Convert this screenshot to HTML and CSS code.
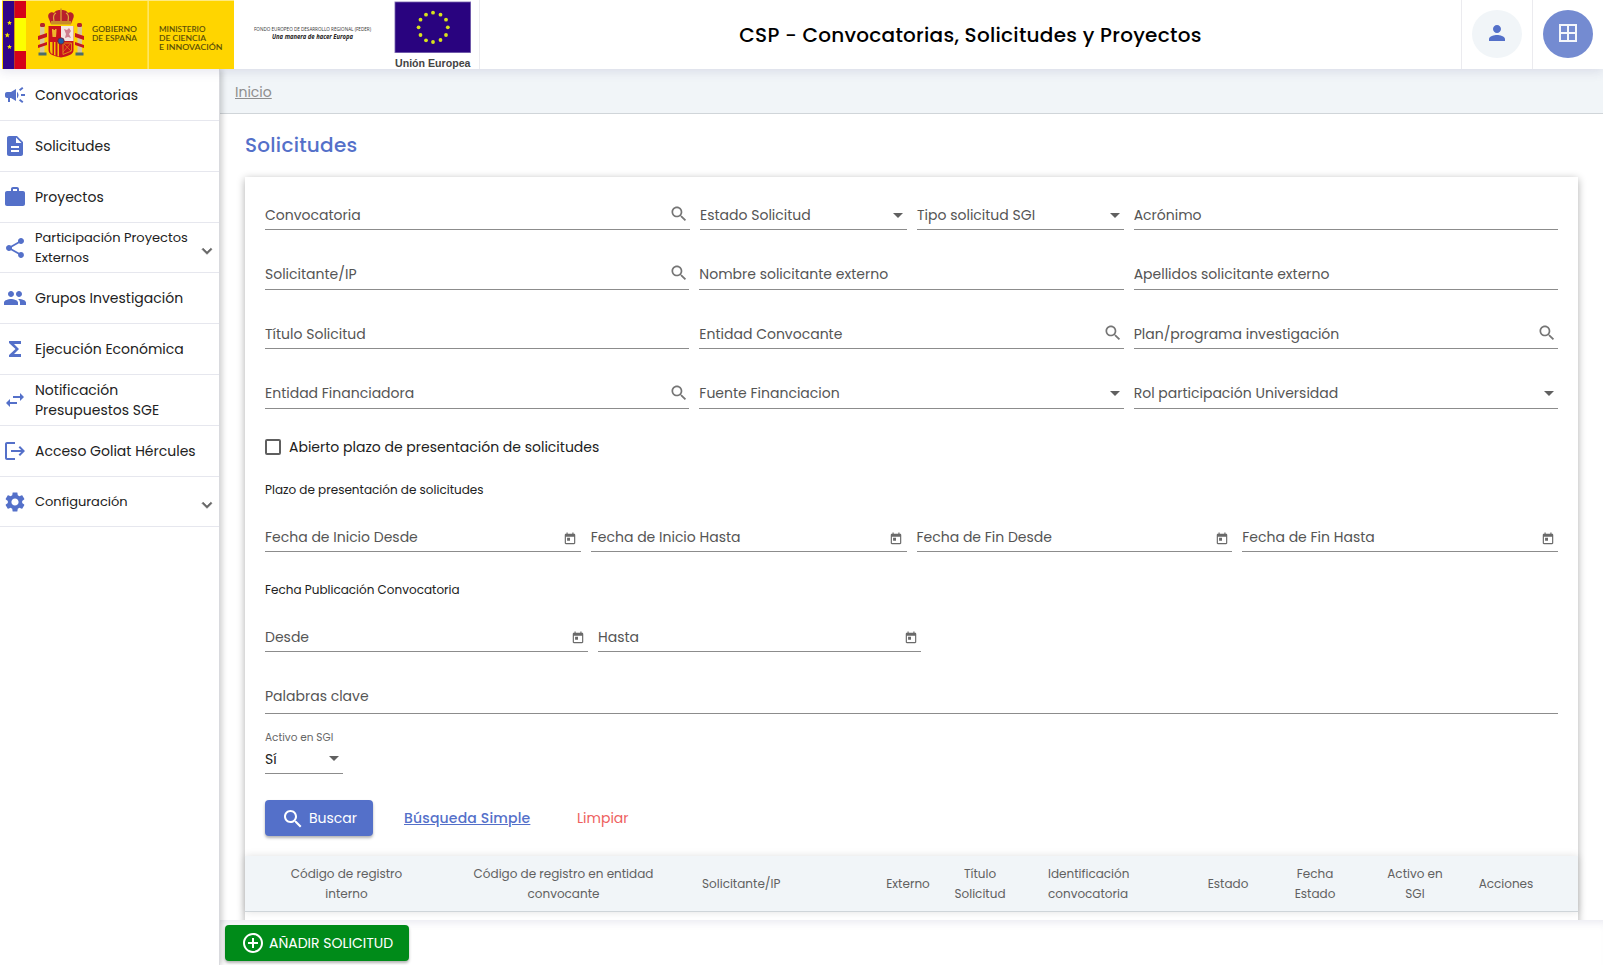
FILE: index.html
```html
<!DOCTYPE html>
<html lang="es">
<head>
<meta charset="utf-8">
<title>CSP - Convocatorias, Solicitudes y Proyectos</title>
<link rel="stylesheet" href="styles.css">
</head>
<body>
<svg class="defs" aria-hidden="true">
  <symbol id="search" viewBox="0 0 24 24"><path d="M15.5 14h-.79l-.28-.27C15.41 12.59 16 11.11 16 9.5 16 5.91 13.09 3 9.5 3S3 5.91 3 9.5 5.91 16 9.5 16c1.61 0 3.09-.59 4.23-1.57l.27.28v.79l5 4.99L20.49 19l-4.99-5zm-6 0C7.01 14 5 11.99 5 9.5S7.01 5 9.5 5 14 7.01 14 9.5 11.99 14 9.5 14z"/></symbol>
  <symbol id="calendar" viewBox="0 0 24 24"><path d="M19 3h-1V1h-2v2H8V1H6v2H5c-1.11 0-1.99.9-1.99 2L3 19c0 1.1.89 2 2 2h14c1.1 0 2-.9 2-2V5c0-1.1-.9-2-2-2zm0 16H5V8h14v11zM7 10h5v5H7z"/></symbol>
  <symbol id="chevron" viewBox="0 0 24 24"><path d="M16.59 8.59L12 13.17 7.41 8.59 6 10l6 6 6-6z" stroke="currentColor" stroke-width=".8"/></symbol>
</svg>

<header class="header">
  <svg class="logo-gob" width="235" height="69" viewBox="0 0 235 69">
    <rect x="2" y="0.500" width="232" height="68.500" fill="#ffd500"/>
    <rect x="3" y="1" width="11.500" height="68" fill="#310489"/>
    <rect x="14.500" y="1" width="11.500" height="68" fill="#d50219"/>
    <rect x="14.500" y="18" width="11.500" height="33" fill="#fcff00"/>
    <g fill="#f4e600">
      <path d="M9.500 20.500l.7 1.600 1.700.1-1.300 1.100.4 1.700-1.500-.9-1.500.9.4-1.700-1.300-1.100 1.700-.1z"/>
      <path d="M7.300 32.500l.8 1.800 1.900.1-1.500 1.200.5 1.900-1.700-1-1.700 1 .5-1.900-1.500-1.200 1.900-.1z"/>
      <path d="M9.500 44.500l.7 1.600 1.700.1-1.300 1.100.4 1.700-1.500-.9-1.500.9.4-1.700-1.300-1.100 1.700-.1z"/>
    </g>
    <rect x="147.600" y="1" width="1" height="68" fill="#fff0a0"/>
    <g class="arms">
      <rect x="40" y="26" width="4.500" height="28" fill="#d9c79a"/><rect x="77.500" y="26" width="4.500" height="28" fill="#d9c79a"/>
      <rect x="40" y="23" width="5" height="4" rx="1.500" fill="#b5222c"/><rect x="77" y="23" width="5" height="4" rx="1.500" fill="#b5222c"/>
      <path d="M38 36l9-3v4l-9 3zM38 45l9-3v3l-9 3zM84 36l-9-3v4l9 3zM84 45l-9-3v3l9 3z" fill="#c5161f"/>
      <rect x="38.500" y="52.500" width="8" height="3" fill="#4b6e6a"/><rect x="75.500" y="52.500" width="8" height="3" fill="#4b6e6a"/>
      <path d="M49 19c-3-6 3-8 5-6 2-3 4-3 7-3s5 0 7 3c2-2 8 0 5 6l-2 5H51z" fill="#b8202b"/>
      <path d="M54 21c-1-4 0-7 2-8M61 21V10M68 21c1-4 0-7-2-8" fill="none" stroke="#e0a83c" stroke-width="1.200"/>
      <path d="M60.300 8.500h1.400v3h-1.400zM51 21h20v3.500H51z" fill="#c98a2a"/>
      <path d="M48.500 26h25v24c0 5-6 6-12.500 7.500C54.500 56 48.500 55 48.500 50z" fill="#c9141d"/>
      <path d="M61 26h12.500v15H61z" fill="#f3e6e3"/>
      <path d="M64 29l3 1 2-2 2 3-2 3 2 4-3-1-3 1 1-4z" fill="#cf7f8f"/>
      <path d="M52 31v-2h1.500v1h1.500v-1h1.500v2l-.5 6h-3.500z" fill="#efb62a"/>
      <path d="M50 42v8c0 3 2 4 2.500 4V42zM54 42v13l1.500.5V42zM57.500 42v14l1.500.5V42z" fill="#f5c400"/>
      <path d="M63 43h8.500v8l-8.500 3.500z" fill="none" stroke="#e08a1a" stroke-width="1"/>
      <path d="M63 43l8 8M71 43l-8 9" stroke="#e08a1a" stroke-width=".7"/>
      <circle cx="61" cy="41" r="3.200" fill="#1f5da8" stroke="#7b1a2a" stroke-width=".8"/>
    </g>
    <g class="gob-text">
      <text x="92" y="32" textLength="45" lengthAdjust="spacingAndGlyphs">GOBIERNO</text>
      <text x="92" y="41" textLength="45" lengthAdjust="spacingAndGlyphs">DE ESPAÑA</text>
      <text x="159" y="32" textLength="46.500" lengthAdjust="spacingAndGlyphs">MINISTERIO</text>
      <text x="159" y="41" textLength="47" lengthAdjust="spacingAndGlyphs">DE CIENCIA</text>
      <text x="159" y="50" textLength="63.500" lengthAdjust="spacingAndGlyphs">E INNOVACIÓN</text>
    </g>
  </svg>
  <svg class="logo-ue" width="244" height="69" viewBox="235 0 244 69">
    <text class="feder" x="254" y="31.300" textLength="117" lengthAdjust="spacingAndGlyphs">FONDO EUROPEO DE DESARROLLO REGIONAL (FEDER)</text>
    <text class="manera" x="272" y="38.500" textLength="81" lengthAdjust="spacingAndGlyphs">Una manera de hacer Europa</text>
    <rect x="394.500" y="1.500" width="76.500" height="51.500" fill="#8f80bd"/>
    <rect x="395.300" y="2.300" width="75" height="50" fill="#29037f"/>
    <g fill="#d8e31c">
      <circle cx="433" cy="12.700" r="1.900"/><circle cx="440.500" cy="14.700" r="1.900"/><circle cx="446" cy="19.700" r="1.900"/><circle cx="447.800" cy="27.300" r="1.900"/><circle cx="446" cy="35" r="1.900"/><circle cx="440.500" cy="40" r="1.900"/><circle cx="433" cy="42" r="1.900"/><circle cx="426" cy="40.300" r="1.900"/><circle cx="420.500" cy="35" r="1.900"/><circle cx="418.600" cy="27.300" r="1.900"/><circle cx="420.500" cy="19.700" r="1.900"/><circle cx="426" cy="14.700" r="1.900"/>
    </g>
    <text class="union" x="395" y="66.800" textLength="75.500" lengthAdjust="spacingAndGlyphs">Unión Europea</text>
  </svg>
  <h1 class="app-title">CSP - Convocatorias, Solicitudes y Proyectos</h1>
  <div class="user-cell"><span class="round"><svg class="i24" viewBox="0 0 24 24"><path d="M12 12c2.210 0 4-1.790 4-4s-1.790-4-4-4-4 1.790-4 4 1.790 4 4 4zm0 2c-2.670 0-8 1.340-8 4v2h16v-2c0-2.660-5.330-4-8-4z"/></svg></span></div>
  <div class="apps-cell"><span class="round round-apps"><svg class="i24" viewBox="0 0 24 24"><path d="M3 3v18h18V3H3zm8 16H5v-6h6v6zm0-8H5V5h6v6zm8 8h-6v-6h6v6zm0-8h-6V5h6v6z"/></svg></span></div>
</header>

<div class="body">
  <nav class="side">
    <a class="item"><svg class="i24" viewBox="0 0 24 24"><path d="M18 11v2h4v-2h-4zm-2 6.610c.96.71 2.210 1.650 3.200 2.390.4-.53.8-1.070 1.200-1.600-.99-.74-2.240-1.680-3.200-2.400-.4.540-.8 1.080-1.200 1.610zM20.400 5.600c-.4-.53-.8-1.070-1.200-1.600-.99.74-2.240 1.680-3.200 2.400.4.530.8 1.070 1.200 1.600.96-.72 2.210-1.650 3.200-2.400zM4 9c-1.100 0-2 .9-2 2v2c0 1.100.9 2 2 2h1v4h2v-4h1l5 3V6L8 9H4zm11.500 3c0-1.330-.58-2.530-1.500-3.350v6.690c.92-.81 1.500-2.010 1.500-3.340z"/></svg><span>Convocatorias</span></a>
    <a class="item"><svg class="i24" viewBox="0 0 24 24"><path d="M14 2H6c-1.100 0-1.990.9-1.990 2L4 20c0 1.100.89 2 1.990 2H18c1.100 0 2-.9 2-2V8l-6-6zm2 16H8v-2h8v2zm0-4H8v-2h8v2zm-3-5V3.500L18.500 9H13z"/></svg><span>Solicitudes</span></a>
    <a class="item"><svg class="i24" viewBox="0 0 24 24"><path d="M20 6h-4V4c0-1.110-.89-2-2-2h-4c-1.110 0-2 .89-2 2v2H4c-1.110 0-1.990.89-1.990 2L2 19c0 1.110.89 2 2 2h16c1.110 0 2-.89 2-2V8c0-1.110-.89-2-2-2zm-6 0h-4V4h4v2z"/></svg><span>Proyectos</span></a>
    <a class="item short small"><svg class="i24" viewBox="0 0 24 24"><path d="M18 16.080c-.76 0-1.440.3-1.960.77L8.910 12.700c.05-.23.09-.46.09-.7s-.04-.47-.09-.7l7.050-4.110c.54.5 1.250.81 2.040.81 1.660 0 3-1.340 3-3s-1.340-3-3-3-3 1.340-3 3c0 .24.04.47.09.7L8.040 9.810C7.500 9.310 6.790 9 6 9c-1.660 0-3 1.340-3 3s1.340 3 3 3c.79 0 1.500-.31 2.040-.81l7.120 4.160c-.05.21-.08.43-.08.65 0 1.610 1.310 2.920 2.920 2.920s2.920-1.310 2.920-2.920-1.310-2.920-2.920-2.920z"/></svg><span>Participación Proyectos<br>Externos</span><svg class="chev"><use href="#chevron"/></svg></a>
    <a class="item"><svg class="i24" viewBox="0 0 24 24"><path d="M16 11c1.660 0 2.990-1.340 2.990-3S17.660 5 16 5c-1.660 0-3 1.340-3 3s1.340 3 3 3zm-8 0c1.660 0 2.990-1.340 2.990-3S9.660 5 8 5C6.340 5 5 6.340 5 8s1.340 3 3 3zm0 2c-2.330 0-7 1.170-7 3.500V19h14v-2.500c0-2.330-4.670-3.500-7-3.500zm8 0c-.29 0-.62.02-.97.05 1.160.84 1.970 1.970 1.970 3.450V19h6v-2.500c0-2.330-4.670-3.500-7-3.500z"/></svg><span>Grupos Investigación</span></a>
    <a class="item"><svg class="i24" viewBox="0 0 24 24"><path d="M18 4H6v2l6.500 6L6 18v2h12v-3h-7l5-5-5-5h7z"/></svg><span>Ejecución Económica</span></a>
    <a class="item"><svg class="i24" viewBox="0 0 24 24"><path d="M6.990 11L3 15l3.990 4v-3H14v-2H6.990v-3zM21 9l-3.990-4v3H10v2h7.010v3L21 9z"/></svg><span>Notificación<br>Presupuestos SGE</span></a>
    <a class="item"><svg class="i24" viewBox="0 0 24 24"><path d="M17 7l-1.410 1.410L18.170 11H8v2h10.170l-2.580 2.580L17 17l5-5zM4 5h8V3H4c-1.100 0-2 .9-2 2v14c0 1.100.9 2 2 2h8v-2H4V5z"/></svg><span>Acceso Goliat Hércules</span></a>
    <a class="item short small"><svg class="i24" viewBox="0 0 24 24"><path d="M19.140 12.940c.04-.3.060-.61.060-.94 0-.32-.02-.64-.07-.94l2.030-1.580c.18-.14.23-.41.12-.61l-1.920-3.320c-.12-.22-.37-.29-.59-.22l-2.390.96c-.5-.38-1.030-.7-1.620-.94l-.36-2.540c-.04-.24-.24-.41-.48-.41h-3.840c-.24 0-.43.17-.47.41l-.36 2.540c-.59.24-1.130.57-1.620.94l-2.390-.96c-.22-.08-.47 0-.59.22L2.740 8.870c-.12.21-.08.47.12.61l2.030 1.580c-.05.3-.09.63-.09.94s.02.64.07.94l-2.030 1.580c-.18.14-.23.41-.12.61l1.920 3.320c.12.22.37.29.59.22l2.390-.96c.5.38 1.030.7 1.620.94l.36 2.540c.05.24.24.41.48.41h3.840c.24 0 .44-.17.47-.41l.36-2.540c.59-.24 1.130-.56 1.620-.94l2.390.96c.22.08.47 0 .59-.22l1.920-3.320c.12-.22.07-.47-.12-.61l-2.010-1.580zM12 15.600c-1.980 0-3.600-1.620-3.600-3.600s1.620-3.600 3.600-3.600 3.600 1.620 3.600 3.600-1.620 3.600-3.600 3.600z"/></svg><span>Configuración</span><svg class="chev"><use href="#chevron"/></svg></a>
  </nav>

  <div class="page">
    <div class="crumbs"><a>Inicio</a></div>
    <main class="content">
      <h2 class="title">Solicitudes</h2>
      <section class="card">
        <div class="form">
          <div class="row row-a">
            <div class="field"><span>Convocatoria</span><svg class="s-ico"><use href="#search"/></svg></div>
            <div class="field"><span>Estado Solicitud</span><i class="arrow"></i></div>
            <div class="field"><span>Tipo solicitud SGI</span><i class="arrow"></i></div>
            <div class="field"><span>Acrónimo</span></div>
          </div>
          <div class="row row-b">
            <div class="field"><span>Solicitante/IP</span><svg class="s-ico"><use href="#search"/></svg></div>
            <div class="field"><span>Nombre solicitante externo</span></div>
            <div class="field"><span>Apellidos solicitante externo</span></div>
          </div>
          <div class="row row-b tight">
            <div class="field"><span>Título Solicitud</span></div>
            <div class="field"><span>Entidad Convocante</span><svg class="s-ico"><use href="#search"/></svg></div>
            <div class="field"><span>Plan/programa investigación</span><svg class="s-ico"><use href="#search"/></svg></div>
          </div>
          <div class="row row-b last">
            <div class="field"><span>Entidad Financiadora</span><svg class="s-ico"><use href="#search"/></svg></div>
            <div class="field"><span>Fuente Financiacion</span><i class="arrow"></i></div>
            <div class="field"><span>Rol participación Universidad</span><i class="arrow"></i></div>
          </div>
          <label class="check"><i class="box"></i><span>Abierto plazo de presentación de solicitudes</span></label>
          <p class="legend">Plazo de presentación de solicitudes</p>
          <div class="row row-d">
            <div class="field"><span>Fecha de Inicio Desde</span><svg class="c-ico"><use href="#calendar"/></svg></div>
            <div class="field"><span>Fecha de Inicio Hasta</span><svg class="c-ico"><use href="#calendar"/></svg></div>
            <div class="field"><span>Fecha de Fin Desde</span><svg class="c-ico"><use href="#calendar"/></svg></div>
            <div class="field"><span>Fecha de Fin Hasta</span><svg class="c-ico"><use href="#calendar"/></svg></div>
          </div>
          <p class="legend second">Fecha Publicación Convocatoria</p>
          <div class="row row-e">
            <div class="field"><span>Desde</span><svg class="c-ico"><use href="#calendar"/></svg></div>
            <div class="field"><span>Hasta</span><svg class="c-ico"><use href="#calendar"/></svg></div>
          </div>
          <div class="field keywords"><span>Palabras clave</span></div>
          <div class="active-label">Activo en SGI</div>
          <div class="field active"><span>Sí</span><i class="arrow"></i></div>
          <div class="actions">
            <button class="btn btn-primary"><svg class="i24"><use href="#search"/></svg><span>Buscar</span></button>
            <a class="simple">Búsqueda Simple</a>
            <a class="clear">Limpiar</a>
          </div>
        </div>
        <div class="thead">
          <span>Código de registro<br>interno</span>
          <span>Código de registro en entidad<br>convocante</span>
          <span class="th-applicant">Solicitante/IP</span>
          <span>Externo</span>
          <span>Título<br>Solicitud</span>
          <span class="th-call">Identificación<br>convocatoria</span>
          <span class="th-state">Estado</span>
          <span>Fecha<br>Estado</span>
          <span>Activo en<br>SGI</span>
          <span>Acciones</span>
        </div>
      </section>
    </main>
    <footer class="bottom">
      <button class="btn btn-add"><svg class="i24" viewBox="0 0 24 24"><path d="M13 7h-2v4H7v2h4v4h2v-4h4v-2h-4V7zm-1-5C6.480 2 2 6.480 2 12s4.480 10 10 10 10-4.480 10-10S17.520 2 12 2zm0 18c-4.410 0-8-3.590-8-8s3.590-8 8-8 8 3.590 8 8-3.590 8-8 8z"/></svg><span>AÑADIR SOLICITUD</span></button>
    </footer>
  </div>
</div>
</body>
</html>
```
FILE: styles.css
```css
* { box-sizing: border-box; }
body {
  margin: 0; width: 1603px; height: 965px; overflow: hidden;
  display: flex; flex-direction: column;
  font: 400 14px/20px Poppins, Inter, "Open Sans", sans-serif;
  color: #212121; background: #fff;
}
h1, h2, p { margin: 0; }
svg { flex: none; display: block; fill: currentColor; }
.defs { display: none; }
.i24 { width: 24px; height: 24px; }

/* header */
.header {
  height: 69px; flex: none; display: flex; background: #fff;
  position: relative; z-index: 3; box-shadow: 0 3px 10px rgba(60, 60, 120, .12);
}
.gob-text { font: 600 7.800px Lato, sans-serif; fill: #5c4f08; }
.feder { font: 5.200px "Open Sans", sans-serif; fill: #333; }
.manera { font: italic 700 6.600px "Open Sans", sans-serif; fill: #222; }
.union { font: 700 11.500px "Liberation Sans", sans-serif; fill: #444; }
.app-title {
  flex: 1; border-left: 1px solid #ebebef; text-align: center;
  font-size: 20px; line-height: 70px; font-weight: 500; letter-spacing: .0133em; color: #000;
}
.user-cell, .apps-cell { display: flex; align-items: center; border-left: 1px solid #ebebef; }
.user-cell { width: 71px; padding-left: 10px; }
.apps-cell { width: 71px; padding-left: 10px; }
.round {
  width: 50px; height: 48px; border-radius: 50%; margin-top: -1px; padding-bottom: 2px;
  display: flex; align-items: center; justify-content: center;
  background: #f1f5f8; color: #5470c9;
}
.round-apps { background: #748bd1; color: #f4f6fb; }

.body { flex: 1; min-height: 0; display: flex; }

/* side menu */
.side {
  width: 220px; flex: none; background: #fff; position: relative; z-index: 2;
  border-right: 1px solid #d9dade; box-shadow: 2px 0 6px rgba(0, 0, 0, .2);
}
.item {
  display: flex; align-items: center; gap: 8px; height: 51px; padding-left: 3px;
  border-bottom: 1px solid #e6e7ee; white-space: nowrap;
}
.item:first-child { height: 52px; padding-top: 1px; }
.item.short { height: 50px; }
.item > .i24 { color: #5470c9; }
.small { font-size: 13px; }
.chev { width: 20px; height: 20px; margin: 6px 2px 0 auto; color: #666; }

/* page */
.page { flex: 1; min-width: 0; display: flex; flex-direction: column; }
.crumbs {
  height: 45px; flex: none; background: #f1f5f8; border-bottom: 1px solid #d0d5d9;
  padding: 13px 0 0 15px; color: #8e8e8e;
}
.crumbs a { text-decoration: underline; }
.content { flex: 1; min-height: 0; overflow: hidden; padding: 16px 25px 0; }
.title { font-size: 20px; line-height: 30px; font-weight: 500; letter-spacing: .0125em; color: #5470c9; }
.card { margin-top: 17px; height: 760px; background: #fff; box-shadow: 0 2px 8px rgba(0, 0, 0, .32); }
.form { padding: 23px 20px 0; height: 679px; }

.row { display: grid; column-gap: 10px; }
.row-a { grid-template-columns: 425px 207px 206.650px 424.350px; }
.row-b { grid-template-columns: repeat(3, 1fr); margin-top: 29px; }
.row-b .field { height: 31px; padding-bottom: 1px; }
.row-b.tight .field { height: 30px; padding-bottom: 0; }
.row-d { grid-template-columns: repeat(4, 1fr); }
.row-e { grid-template-columns: 323px 323px; }
.field {
  height: 30px; display: flex; align-items: center; justify-content: space-between;
  border-bottom: 1px solid #8c8c8c; color: #555;
}
.s-ico { width: 20px; height: 20px; margin-top: -1px; color: #757575; }
.row-a .s-ico { margin-right: 1px; }
.tight .s-ico { margin-right: .6px; }
.last .s-ico { margin-top: 1px; }
.c-ico { width: 14px; height: 14px; margin: 4px 4px 0 0; color: #6a6a6a; }
.row-d .field:nth-child(n+3) .c-ico { margin-right: 3px; }
.row-e .c-ico { margin: 3px 3px 0 0; }
.arrow {
  border: 5px solid transparent; border-top-color: #606060; border-bottom: 0;
  margin-right: 4px; margin-top: 1px;
}

.check { display: flex; align-items: center; gap: 8px; margin-top: 28px; height: 20px; }
.box { width: 16px; height: 16px; border: 2px solid #5f5f5f; border-radius: 2px; }
.legend { font-size: 12px; margin: 23px 0 22px; }
.legend.second { margin: 28px 0 22px; }
.keywords { margin-top: 27px; height: 35px; }
.active-label { font-size: 10.500px; color: #666; line-height: 13px; margin-top: 17px; }
.active { width: 78px; color: #212121; }
.active .arrow { margin-top: -1px; }

.actions { display: flex; align-items: center; margin-top: 26px; }
.btn {
  height: 36px; border: 0; border-radius: 4px; color: #fff; font: inherit;
  display: flex; align-items: center; white-space: nowrap;
  box-shadow: 0 2px 3px rgba(0, 0, 0, .3);
}
.btn-primary { width: 108px; padding: 0 0 0 16px; gap: 4px; background: #5470c9; }
.btn-primary .i24 { margin-top: 1px; }
.simple { margin-left: 31px; width: 126px; font-weight: 500; letter-spacing: .0125em; color: #5470c9; text-decoration: underline; white-space: nowrap; }
.clear { margin-left: 47px; color: #ee5f60; }

.thead {
  display: grid; align-items: center; text-align: center; white-space: nowrap; height: 56px;
  grid-template-columns: 203px 231px 199px 60px 84px 134px 114px 90px 110px 72px;
  background: #f1f5f8; border-bottom: 1px solid #cfd5d9; box-shadow: 0 0 8px rgba(0, 0, 0, .12);
  font-size: 12px; color: #616161;
}
.th-applicant { text-align: left; padding-left: 23px; }
.th-call { text-align: left; padding-left: 26px; }
.th-state { padding-left: 30px; }

.bottom {
  height: 45px; flex: none; background: #fff; padding: 5px;
  box-shadow: inset 0 8px 8px -6px rgba(60, 60, 120, .12);
}
.btn-add { width: 184px; padding: 0 0 0 16px; gap: 4px; background: #008b19; }
```
